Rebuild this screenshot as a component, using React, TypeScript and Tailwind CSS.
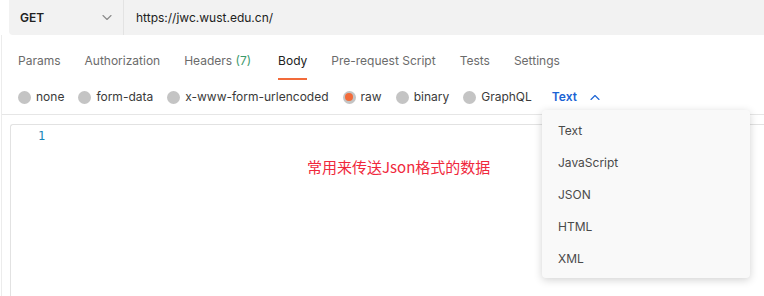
const tabs = ["Params", "Authorization", "Headers", "Body", "Pre-request Script", "Tests", "Settings"];
const bodyTypes = ["none", "form-data", "x-www-form-urlencoded", "raw", "binary", "GraphQL"];
const languages = ["Text", "JavaScript", "JSON", "HTML", "XML"];

function Chevron({ up = false, className = "" }: { up?: boolean; className?: string }) {
  return (
    <svg width="10" height="6" viewBox="0 0 10 6" fill="none" className={className}>
      <path
        d={up ? "M1 5.5 5 1.5l4 4" : "M1 .5l4 4 4-4"}
        stroke="currentColor"
        strokeWidth="1.1"
        strokeLinecap="round"
        strokeLinejoin="round"
      />
    </svg>
  );
}

export default function App() {
  return (
    <div className="relative h-[296px] w-[764px] overflow-hidden bg-white font-['Inter','Noto_Sans_CJK_SC',sans-serif] text-[12px]">
      {/* request line */}
      <div className="ml-[9px] flex h-[35px] rounded-bl-[4px] bg-[#f2f2f2]">
        <div className="flex w-[115px] items-center justify-between border-r border-[#e3e3e3] pl-[11px] pr-[11px]">
          <span className="font-semibold text-[#212121]">GET</span>
          <Chevron className="text-[#8a8a8a]" />
        </div>
        <div className="flex items-center pl-[12px] text-[#212121]">https://jwc.wust.edu.cn/</div>
      </div>

      <div className="ml-[1px] border-l border-[#ececec]">
        {/* tabs */}
        <div className="flex h-[45px] items-end gap-[24px] pl-[16px]">
          {tabs.map((t) => (
            <div
              key={t}
              className={
                t === "Body"
                  ? "ml-[3px] flex h-[34px] flex-col justify-between text-[#212121]"
                  : "flex h-[34px] flex-col justify-between text-[#6b6b6b]"
              }
            >
              <span className="pt-[6px]">
                {t}
                {t === "Headers" && <span className="text-[#3d9a6c]"> (7)</span>}
              </span>
              <div className={t === "Body" ? "h-[2px] bg-[#f26b3a]" : "h-[2px]"} />
            </div>
          ))}
        </div>

        {/* body type */}
        <div className="flex h-[35px] items-center gap-[14px] border-b border-[#e6e6e6] pl-[16px]">
          {bodyTypes.map((b) => (
            <div key={b} className="flex items-center gap-[5px] text-[#3a3a3a]">
              <span className="flex h-[13px] w-[13px] items-center justify-center rounded-full bg-[#c4c4c4]">
                {b === "raw" && <span className="h-[8px] w-[8px] rounded-full bg-[#f26b3a]" />}
              </span>
              {b}
            </div>
          ))}
          <div className="ml-[6px] flex items-center gap-[13px] text-[#1a63d4]">
            <span className="font-semibold">Text</span>
            <Chevron up />
          </div>
        </div>

        {/* editor */}
        <div className="ml-[8px] mt-[9px] h-[200px] rounded-tl-[3px] border-l border-t border-[#e2e2e2]">
          <div className="pl-[27px] pt-[2px] font-['DejaVu_Sans_Mono',monospace] text-[12px] leading-[18px] text-[#1a85b8]">
            1
          </div>
          <div className="pl-[296px] pt-[11px] font-['Noto_Sans_CJK_SC','Microsoft_YaHei',sans-serif] text-[15px] leading-[22px] text-[#f0283c]">
            常用来传送Json格式的数据
          </div>
        </div>
      </div>

      {/* language menu */}
      <div className="absolute left-[542px] top-[110px] w-[208px] rounded-[4px] bg-[#f9f9f9] pb-[3px] pt-[5px] shadow-[0_2px_8px_rgba(0,0,0,0.18)]">
        {languages.map((l) => (
          <div key={l} className="flex h-[32px] items-center pl-[16px] text-[#4a4a4a]">
            {l}
          </div>
        ))}
      </div>
    </div>
  );
}
